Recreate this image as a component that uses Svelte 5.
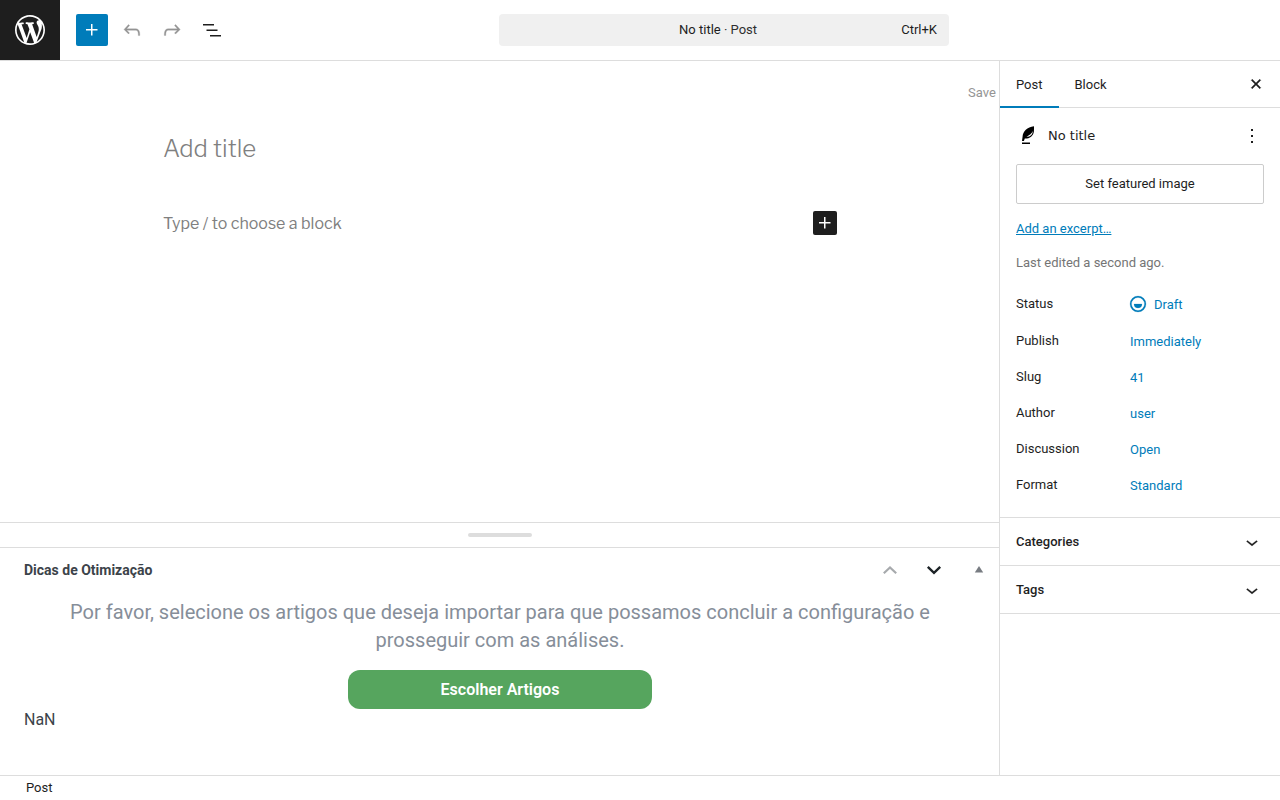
<script lang="ts">
	interface Row {
		label: string;
		value: string;
		icon?: boolean;
	}

	const rows: Row[] = [
		{ label: 'Status', value: 'Draft', icon: true },
		{ label: 'Publish', value: 'Immediately' },
		{ label: 'Slug', value: '41' },
		{ label: 'Author', value: 'user' },
		{ label: 'Discussion', value: 'Open' },
		{ label: 'Format', value: 'Standard' }
	];

	const panels = ['Categories', 'Tags'];

	const icons = {
		plus: 'M11 12.5V17.5H12.5V12.5H17.5V11H12.5V6H11V11H6V12.5H11Z',
		undo: 'M18.3 11.7c-.6-.6-1.4-.9-2.3-.9H6.7l2.9-3.3-1.1-1-4.5 5L8.5 16l1-1-2.7-2.7H16c.5 0 .9.2 1.3.5 1 1 1 3.4 1 4.5v.3h1.5v-.2c0-1.5 0-4.3-1.5-5.7z',
		redo: 'M15.6 6.5l-1.1 1 2.9 3.3H8c-.9 0-1.7.3-2.3.9-1.4 1.5-1.4 4.2-1.4 5.6v.2h1.5v-.3c0-1.1 0-3.5 1-4.5.3-.3.7-.5 1.3-.5h9.2L14.5 15l1.1 1.1 4.6-4.6-4.6-5z',
		list: 'M3 6h11v1.5H3V6Zm3.5 5.5h11V13h-11v-1.5ZM21 17H10v1.5h11V17Z',
		close: 'M12 12.06l3.712 3.713 1.061-1.06L13.061 11l3.712-3.712-1.06-1.06L12 9.938 8.288 6.227l-1.061 1.06L10.939 11l-3.712 3.712 1.06 1.061L12 12.061z',
		more: 'M13 19h-2v-2h2v2zm0-6h-2v-2h2v2zm0-6h-2V5h2v2z',
		chevron: 'M17.5 11.6L12 16l-5.5-4.4.9-1.2L12 14l4.5-3.6 1 1.2z',
		draft: 'M12 17.5a6.5 6.5 0 1 0 0-13 6.5 6.5 0 0 0 0 13ZM4 11a8 8 0 1 1 16 0 8 8 0 0 1-16 0Zm8 4a4 4 0 0 0 4-4H8a4 4 0 0 0 4 4Z'
	};

	let tab = $state('Post');
	let title = $state('');
	let content = $state('');
</script>

{#snippet icon(path: string, weight = 0)}
	<svg width="24" height="24" viewBox="0 0 24 24" fill="currentColor" stroke="currentColor" stroke-width={weight} aria-hidden="true"><path d={path} fill-rule="evenodd" /></svg>
{/snippet}

<div class="editor">
	<header class="header">
		<div class="header__start">
			<a class="header__logo" href="#posts" aria-label="View Posts">
				<svg width="36" height="36" viewBox="-2 -2 24 24" fill="currentColor" aria-hidden="true">
					<path d="M20 10c0-5.51-4.49-10-10-10C4.48 0 0 4.49 0 10c0 5.52 4.48 10 10 10 5.51 0 10-4.48 10-10zM7.78 15.37L4.37 6.22c.55-.02 1.17-.08 1.17-.08.5-.06.44-1.13-.06-1.11 0 0-1.45.11-2.37.11-.18 0-.37 0-.58-.01C4.12 2.69 6.87 1.11 10 1.11c2.33 0 4.45.87 6.05 2.34-.68-.11-1.65.39-1.65 1.58 0 .74.45 1.36.9 2.1.35.61.55 1.36.55 2.46 0 1.49-1.4 5-1.4 5l-3.03-8.37c.54-.02.82-.17.82-.17.5-.05.44-1.25-.06-1.22 0 0-1.44.12-2.38.12-.87 0-2.33-.12-2.33-.12-.5-.03-.56 1.2-.06 1.22l.92.08 1.26 3.41zM17.41 10c.24-.64.74-1.87.43-4.25.7 1.29 1.05 2.71 1.05 4.25 0 3.29-1.73 6.24-4.4 7.78.97-2.59 1.94-5.2 2.92-7.78zM6.1 18.09C3.12 16.65 1.11 13.53 1.11 10c0-1.3.23-2.48.72-3.59C3.25 10.3 4.67 14.2 6.1 18.09zm4.03-6.63l2.58 6.98c-.86.29-1.76.45-2.71.45-.79 0-1.57-.11-2.29-.33.81-2.38 1.62-4.74 2.42-7.1z" />
				</svg>
			</a>
			<div class="header__tools">
				<button class="tool tool--primary" aria-label="Toggle block inserter">{@render icon(icons.plus)}</button>
				<button class="tool tool--muted" aria-label="Undo">{@render icon(icons.undo, 0.3)}</button>
				<button class="tool tool--muted" aria-label="Redo">{@render icon(icons.redo, 0.3)}</button>
				<button class="tool" aria-label="Document Overview">{@render icon(icons.list)}</button>
			</div>
		</div>
		<button class="command">
			<span class="command__title">No title <span class="command__type">· Post</span></span>
			<span class="command__shortcut">Ctrl+K</span>
		</button>
	</header>

	<div class="body">
		<main class="main">
			<section class="canvas">
				<div class="canvas__actions">
					<button class="save">Save draft</button>
				</div>
				<div class="canvas__content">
					<input class="canvas__title" aria-label="Add title" placeholder="Add title" bind:value={title} />
					<div class="canvas__block">
						<input class="canvas__text" aria-label="Add default block" placeholder="Type / to choose a block" bind:value={content} />
						<button class="inserter" aria-label="Add block">{@render icon(icons.plus)}</button>
					</div>
				</div>
			</section>

			<section class="metabox">
				<div class="metabox__resize"><span class="metabox__grip"></span></div>
				<div class="metabox__header">
					<h2 class="metabox__title">Dicas de Otimização</h2>
					<div class="metabox__actions">
						<button class="order order--muted" aria-label="Move up">
							<svg width="20" height="20" viewBox="0 0 20 20" fill="none" stroke="currentColor" stroke-width="2.2" aria-hidden="true"><path d="M2.8 13.3 9 7.5l6.2 5.8" /></svg>
						</button>
						<button class="order" aria-label="Move down">
							<svg width="20" height="20" viewBox="0 0 20 20" fill="none" stroke="currentColor" stroke-width="2.4" aria-hidden="true"><path d="M2.8 6.9 9 12.8l6.2-5.9" /></svg>
						</button>
						<button class="order order--toggle" aria-label="Toggle panel">
							<svg width="20" height="20" viewBox="0 0 20 20" fill="currentColor" aria-hidden="true"><path d="M5.8 12.5h8.4L10 6z" /></svg>
						</button>
					</div>
				</div>
				<div class="metabox__inside">
					<p class="metabox__message">Por favor, selecione os artigos que deseja importar para que possamos concluir a configuração e prosseguir com as análises.</p>
					<button class="metabox__button">Escolher Artigos</button>
					<div class="metabox__score">NaN</div>
				</div>
			</section>
		</main>

		<aside class="sidebar" aria-label="Editor settings">
			<div class="tabs">
				{#each ['Post', 'Block'] as name}
					<button class="tabs__item" class:active={tab === name} onclick={() => (tab = name)}>{name}</button>
				{/each}
				<button class="tabs__close" aria-label="Close Settings">{@render icon(icons.close, 0.4)}</button>
			</div>

			<div class="summary">
				<div class="summary__card">
					<svg width="24" height="24" viewBox="0 0 24 24" aria-hidden="true">
						<path d="M18 2.2C11.2 3 6.8 7.3 6.6 12.6L6 17h1.9l.9-2.4c4.8.2 8.6-2.9 9.1-7.2.2-1.8.1-3.5.1-5.2Z" fill="#000" />
						<path d="M16.7 7c-.8 2.3-3.3 4.1-6.2 6 3.7-.1 6.3-2.5 6.2-6Z" fill="#fff" />
						<path d="M6 18.5h8V20H6z" fill="#000" />
					</svg>
					<h2 class="summary__title">No title</h2>
					<button class="summary__more" aria-label="Actions">{@render icon(icons.more)}</button>
				</div>
				<button class="summary__image">Set featured image</button>
				<a class="summary__excerpt" href="#excerpt">Add an excerpt…</a>
				<p class="summary__edited">Last edited a second ago.</p>
				<div class="rows">
					{#each rows as row}
						<div class="row" class:has-icon={row.icon}>
							<span class="row__label">{row.label}</span>
							<button class="row__value" aria-label="{row.label}: {row.value}">
								{#if row.icon}{@render icon(icons.draft, 0.2)}{/if}
								{row.value}
							</button>
						</div>
					{/each}
				</div>
			</div>

			{#each panels as panel}
				<button class="panel">
					{panel}
					{@render icon(icons.chevron, 0.2)}
				</button>
			{/each}
		</aside>
	</div>

	<footer class="footer">Post</footer>
</div>

<style>
	:global(body) {
		margin: 0;
	}

	.editor {
		display: flex;
		flex-direction: column;
		min-height: 100vh;
		background: #fff;
		color: #1e1e1e;
		font: 13px/20px Roboto, sans-serif;
	}

	.editor * {
		box-sizing: border-box;
	}

	button,
	input {
		margin: 0;
		padding: 0;
		border: 0;
		background: none;
		color: inherit;
		font: inherit;
	}

	button {
		cursor: pointer;
	}

	h2,
	p {
		margin: 0;
	}

	svg {
		display: block;
		flex-shrink: 0;
	}

	.header {
		display: grid;
		grid-template-columns: 168px 1fr minmax(0, 450px) 1fr;
		align-items: center;
		border-bottom: 1px solid #ddd;
	}

	.header__start,
	.header__tools {
		display: flex;
		align-items: center;
	}

	.header__start {
		grid-column: 1 / 3;
		gap: 16px;
	}

	.header__tools {
		gap: 8px;
	}

	.header__logo {
		display: grid;
		place-items: center;
		width: 60px;
		height: 60px;
		background: #1e1e1e;
		color: #fff;
	}

	.tool {
		display: grid;
		place-items: center;
		width: 32px;
		height: 32px;
		border-radius: 2px;
	}

	.tool--primary {
		background: #007cba;
		color: #fff;
	}

	.tool--muted {
		color: #949494;
	}

	.command {
		display: flex;
		align-items: center;
		height: 32px;
		padding: 0 12px 0 36px;
		border-radius: 4px;
		background: #f0f0f0;
	}

	.command__title {
		flex: 1;
	}

	.command__type {
		color: #2f2f2f;
	}

	.body {
		display: flex;
		flex: 1;
	}

	.main {
		display: flex;
		flex: 1;
		flex-direction: column;
		min-width: 0;
	}

	.canvas {
		flex: 1;
		overflow: hidden;
	}

	.canvas__actions {
		display: flex;
		justify-content: flex-end;
		padding-top: 16px;
	}

	/* runs on under the settings sidebar */
	.save {
		display: flex;
		flex: 0 0 32px;
		align-items: center;
		justify-content: flex-start;
		min-width: 0;
		height: 32px;
		color: #949494;
		white-space: nowrap;
	}

	.canvas__content {
		max-width: 674px;
		margin: 0 auto;
		padding-top: 20px;
		color: #757575;
		font-family: "Libre Franklin", Inter, sans-serif;
	}

	.canvas__content input::placeholder {
		color: #808080;
		opacity: 1;
	}

	.canvas__title {
		width: 100%;
		height: 38px;
		font-size: 24px;
		font-weight: 300;
	}

	.canvas__block {
		display: flex;
		align-items: center;
		padding-top: 42px;
	}

	.canvas__text {
		flex: 1;
		min-width: 0;
		height: 28px;
		font-size: 16px;
	}

	.inserter {
		border-radius: 2px;
		background: #1e1e1e;
		color: #fff;
	}

	.metabox {
		border-top: 1px solid #ddd;
		color: #3c434a;
	}

	.metabox__resize {
		display: grid;
		place-items: center;
		height: 25px;
		border-bottom: 1px solid #ddd;
	}

	.metabox__grip {
		width: 64px;
		height: 4px;
		border-radius: 2px;
		background: #ddd;
	}

	.metabox__header {
		display: flex;
		align-items: center;
		justify-content: space-between;
		height: 44px;
		padding: 0 11px 0 24px;
	}

	.metabox__title {
		font-size: 14px;
		font-weight: 700;
	}

	.metabox__actions {
		display: flex;
		gap: 24px;
	}

	.order {
		color: #1d2327;
	}

	.order--muted {
		color: #a7aaad;
	}

	.order--toggle {
		color: #787c82;
	}

	.metabox__inside {
		display: flex;
		flex-direction: column;
		align-items: center;
		padding: 6px 24px 44px;
		font-size: 16px;
		line-height: 22px;
	}

	.metabox__message {
		max-width: 904px;
		color: #868e99;
		font-size: 20px;
		line-height: 28px;
		text-align: center;
	}

	.metabox__button {
		width: 32%;
		height: 39px;
		margin-top: 16px;
		border-radius: 12px;
		background: #56a55e;
		color: #fff;
		font-weight: 600;
	}

	.metabox__score {
		align-self: stretch;
	}

	.sidebar {
		flex: 0 0 281px;
		margin-left: -1px;
		border-left: 1px solid #ddd;
		background: #fff;
		z-index: 1;
	}

	.tabs {
		display: flex;
		align-items: center;
		height: 47px;
		box-shadow: inset 0 -1px #ddd;
	}

	.tabs__item {
		height: 100%;
		padding: 0 16px;
	}

	.tabs__item.active {
		box-shadow: inset 0 -2px #007cba;
	}

	.tabs__close {
		margin-right: 12px;
		margin-left: auto;
	}

	.summary {
		padding: 16px;
	}

	.summary__card {
		display: flex;
		align-items: center;
		gap: 8px;
		height: 24px;
		margin-bottom: 16px;
	}

	.summary__title {
		flex: 1;
		font: 13px/20px "DejaVu Sans", sans-serif;
	}

	.summary__image {
		width: 100%;
		height: 40px;
		margin-bottom: 15px;
		border: 1px solid #ccc;
		border-radius: 2px;
	}

	.summary__excerpt {
		display: block;
		margin-bottom: 14px;
		color: #007cba;
	}

	.summary__edited {
		margin-bottom: 15px;
		color: #757575;
	}

	.rows {
		display: grid;
		gap: 4px;
	}

	.row {
		display: grid;
		grid-template-columns: 106px 1fr;
		gap: 8px;
		height: 32px;
	}

	.row.has-icon {
		height: 33px;
	}

	.row__label {
		padding-top: 6px;
	}

	.row__value {
		display: flex;
		align-items: center;
		justify-self: start;
		gap: 4px;
		height: 34px;
		color: #007cba;
	}

	.has-icon .row__value {
		margin-left: -4px;
	}

	.panel {
		display: flex;
		align-items: center;
		justify-content: space-between;
		width: 100%;
		height: 48px;
		padding: 0 16px;
		border-top: 1px solid #ddd;
		font-weight: 500;
	}

	.panel:last-child {
		height: 49px;
		border-bottom: 1px solid #ddd;
	}

	.footer {
		height: 25px;
		padding: 2px 26px;
		border-top: 1px solid #ddd;
	}
</style>
